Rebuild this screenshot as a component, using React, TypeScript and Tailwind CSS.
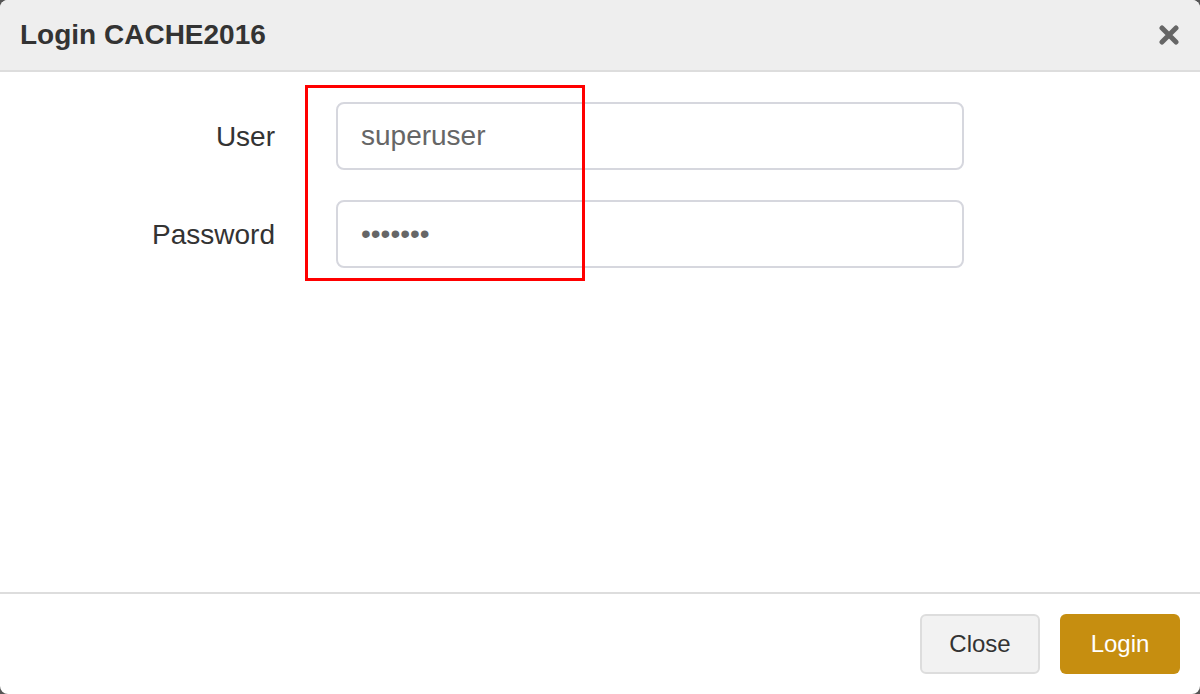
import React from "react";

export default function App() {
  return (
    <div className="w-[1200px] h-[694px] bg-[#555] font-['Liberation_Sans',Arial,sans-serif]">
      <div className="relative w-full h-full bg-white rounded-[8px] overflow-hidden flex flex-col">
        <div className="h-[72px] bg-[#eeeeee] border-b-2 border-[#dddddd] flex items-center justify-between pl-[20px] pr-[21px]">
          <h4 className="text-[28px] font-bold text-[#333] leading-none">Login CACHE2016</h4>
          <button className="w-[20px] h-[20px] flex items-center justify-center">
            <svg width="20" height="20" viewBox="0 0 20 20">
              <path d="M3 3 L17 17 M17 3 L3 17" stroke="#666" strokeWidth="5" strokeLinecap="round" />
            </svg>
          </button>
        </div>

        <div className="flex-1 pt-[30px] flex flex-col gap-[30px]">
          <div className="flex items-center">
            <label className="w-[275px] text-right text-[28px] text-[#333] pt-[2px]">User</label>
            <input
              defaultValue="superuser"
              className="ml-[61px] w-[628px] h-[68px] border-2 border-[#d6d7de] rounded-[8px] px-[23px] text-[28px] text-[#666] outline-none"
            />
          </div>
          <div className="flex items-center">
            <label className="w-[275px] text-right text-[28px] text-[#333] pt-[2px]">Password</label>
            <input
              type="password"
              defaultValue="1234567"
              className="ml-[61px] w-[628px] h-[68px] border-2 border-[#d6d7de] rounded-[8px] px-[23px] text-[28px] text-[#666] outline-none"
            />
          </div>
        </div>

        <div className="h-[102px] border-t-2 border-[#dddddd] flex items-center justify-end gap-[20px] pr-[20px]">
          <button className="w-[120px] h-[60px] bg-[#f2f2f2] border-2 border-[#dddddd] rounded-[6px] text-[24px] text-[#333]">
            Close
          </button>
          <button className="w-[120px] h-[60px] bg-[#c68e10] rounded-[6px] text-[24px] text-white">
            Login
          </button>
        </div>

        <div className="absolute left-[305px] top-[85px] w-[280px] h-[196px] border-[3px] border-[#ff0000] pointer-events-none" />
      </div>
    </div>
  );
}
